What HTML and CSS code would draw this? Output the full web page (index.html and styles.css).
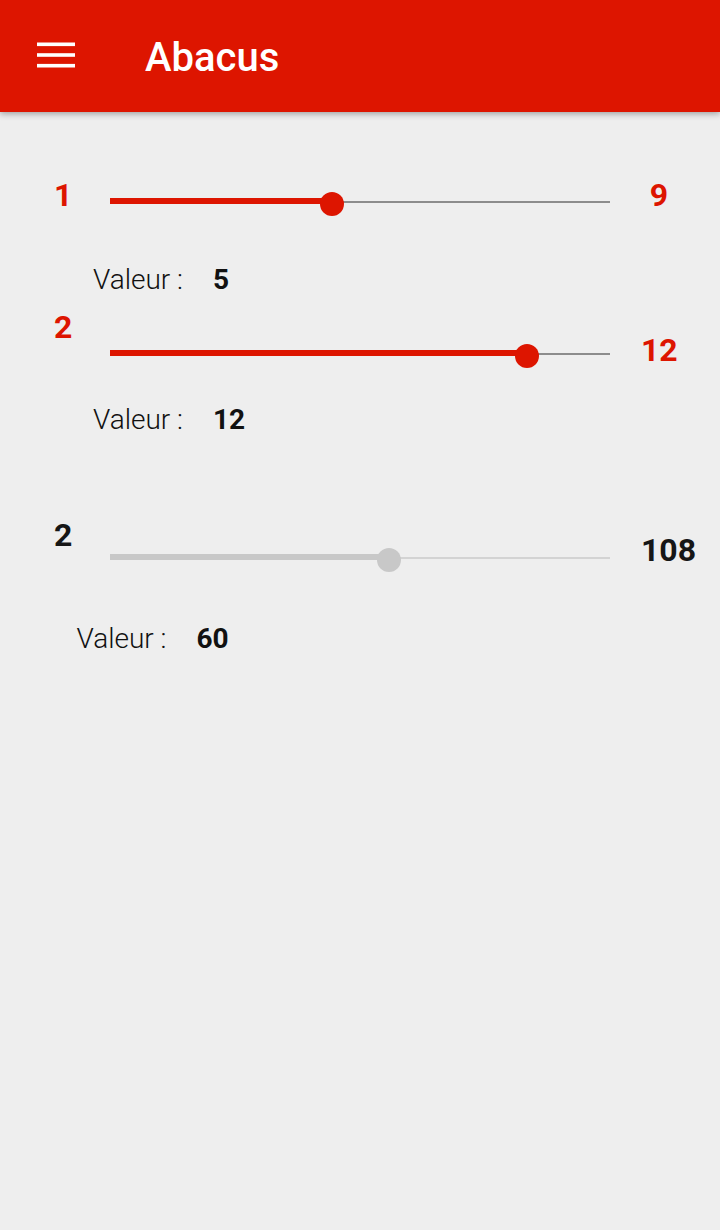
FILE: index.html
```html
<!DOCTYPE html>
<html lang="fr">
<head>
<meta charset="utf-8">
<title>Abacus</title>
<link rel="stylesheet" href="styles.css">
</head>
<body>
<header class="appbar">
  <svg class="menu" width="38" height="26" viewBox="0 0 38 26" aria-hidden="true">
    <rect x="0" y="0.5" width="38" height="3.6" fill="#fff"/>
    <rect x="0" y="11.2" width="38" height="3.6" fill="#fff"/>
    <rect x="0" y="21.9" width="38" height="3.6" fill="#fff"/>
  </svg>
  <h1 class="title">Abacus</h1>
</header>
<main class="content">
  <section class="slider slider-1">
    <span class="lbl lbl-min">1</span>
    <div class="track" style="--p:44.4%">
      <div class="fill"></div><div class="rest"></div>
      <span class="thumb"></span>
    </div>
    <span class="lbl lbl-max">9</span>
  </section>
  <div class="value value-1"><span class="v-label">Valeur :</span><span class="v-num">5</span></div>

  <section class="slider slider-2">
    <span class="lbl lbl-min">2</span>
    <div class="track" style="--p:83.3%">
      <div class="fill"></div><div class="rest"></div>
      <span class="thumb"></span>
    </div>
    <span class="lbl lbl-max">12</span>
  </section>
  <div class="value value-2"><span class="v-label">Valeur :</span><span class="v-num">12</span></div>

  <section class="slider slider-3 disabled">
    <span class="lbl lbl-min">2</span>
    <div class="track" style="--p:55.7%">
      <div class="fill"></div><div class="rest"></div>
      <span class="thumb"></span>
    </div>
    <span class="lbl lbl-max">108</span>
  </section>
  <div class="value value-3"><span class="v-label">Valeur :</span><span class="v-num">60</span></div>
</main>
</body>
</html>
```

FILE: styles.css
```css
html, body {
  margin: 0;
  padding: 0;
}
body {
  background: #eeeeee;
  font-family: Roboto, "Liberation Sans", sans-serif;
  color: #111;
  width: 720px;
  min-height: 1230px;
}
.appbar {
  height: 112px;
  background: #dd1500;
  display: flex;
  align-items: flex-start;
  box-shadow: 0 2px 6px rgba(0, 0, 0, 0.32);
  position: relative;
  z-index: 1;
}
.menu {
  display: block;
  margin: 42px 0 0 37px;
}
.title {
  margin: 38px 0 0 70px;
  font-size: 40px;
  line-height: 40px;
  font-weight: 500;
  color: #fff;
}
.content {
  padding-top: 67px;
}
.slider {
  display: grid;
  grid-template-columns: 110px 500px auto;
  align-items: start;
}
.lbl {
  font-size: 32px;
  line-height: 32px;
  font-weight: 700;
  color: #dd1500;
  white-space: nowrap;
}
.lbl-min {
  padding-left: 54px;
}
.lbl-max {
  width: 36px;
  margin-left: 31px;
  text-align: center;
}
.track {
  position: relative;
  height: 24px;
  display: flex;
  align-items: flex-start;
}
.fill {
  width: var(--p);
  height: 6px;
  margin-top: 6.5px;
  background: #dd1500;
}
.rest {
  flex: 1;
  height: 2px;
  margin-top: 9.3px;
  background: #8c8c8c;
}
.thumb {
  position: absolute;
  top: 0;
  left: calc(var(--p) - 12px);
  width: 24px;
  height: 24px;
  border-radius: 50%;
  background: #dd1500;
}
.slider-1 .track { margin-top: 12.5px; }
.slider-2 { margin-top: 17px; }
.slider-2 .track { margin-top: 33px; }
.slider-2 .lbl-max { margin-top: 23px; }
.slider-3 { margin-top: 85px; }
.slider-3 .track { margin-top: 29px; }
.slider-3 .lbl-max { margin-top: 15px; }

.disabled .lbl { color: #161616; }
.disabled .fill { background: #c8c8c8; }
.disabled .rest { background: #d3d3d3; }
.disabled .thumb { background: #c8c8c8; }

.value {
  display: flex;
  align-items: baseline;
  font-size: 28px;
  line-height: 28px;
  padding-left: 93px;
}
.v-label {
  width: 120px;
  font-weight: 300;
  color: #111;
}
.v-num {
  font-weight: 700;
  color: #111;
}
.value-1 { margin-top: 50px; }
.value-2 { margin-top: 38px; }
.value-3 { margin-top: 53px; padding-left: 76.5px; }
```
